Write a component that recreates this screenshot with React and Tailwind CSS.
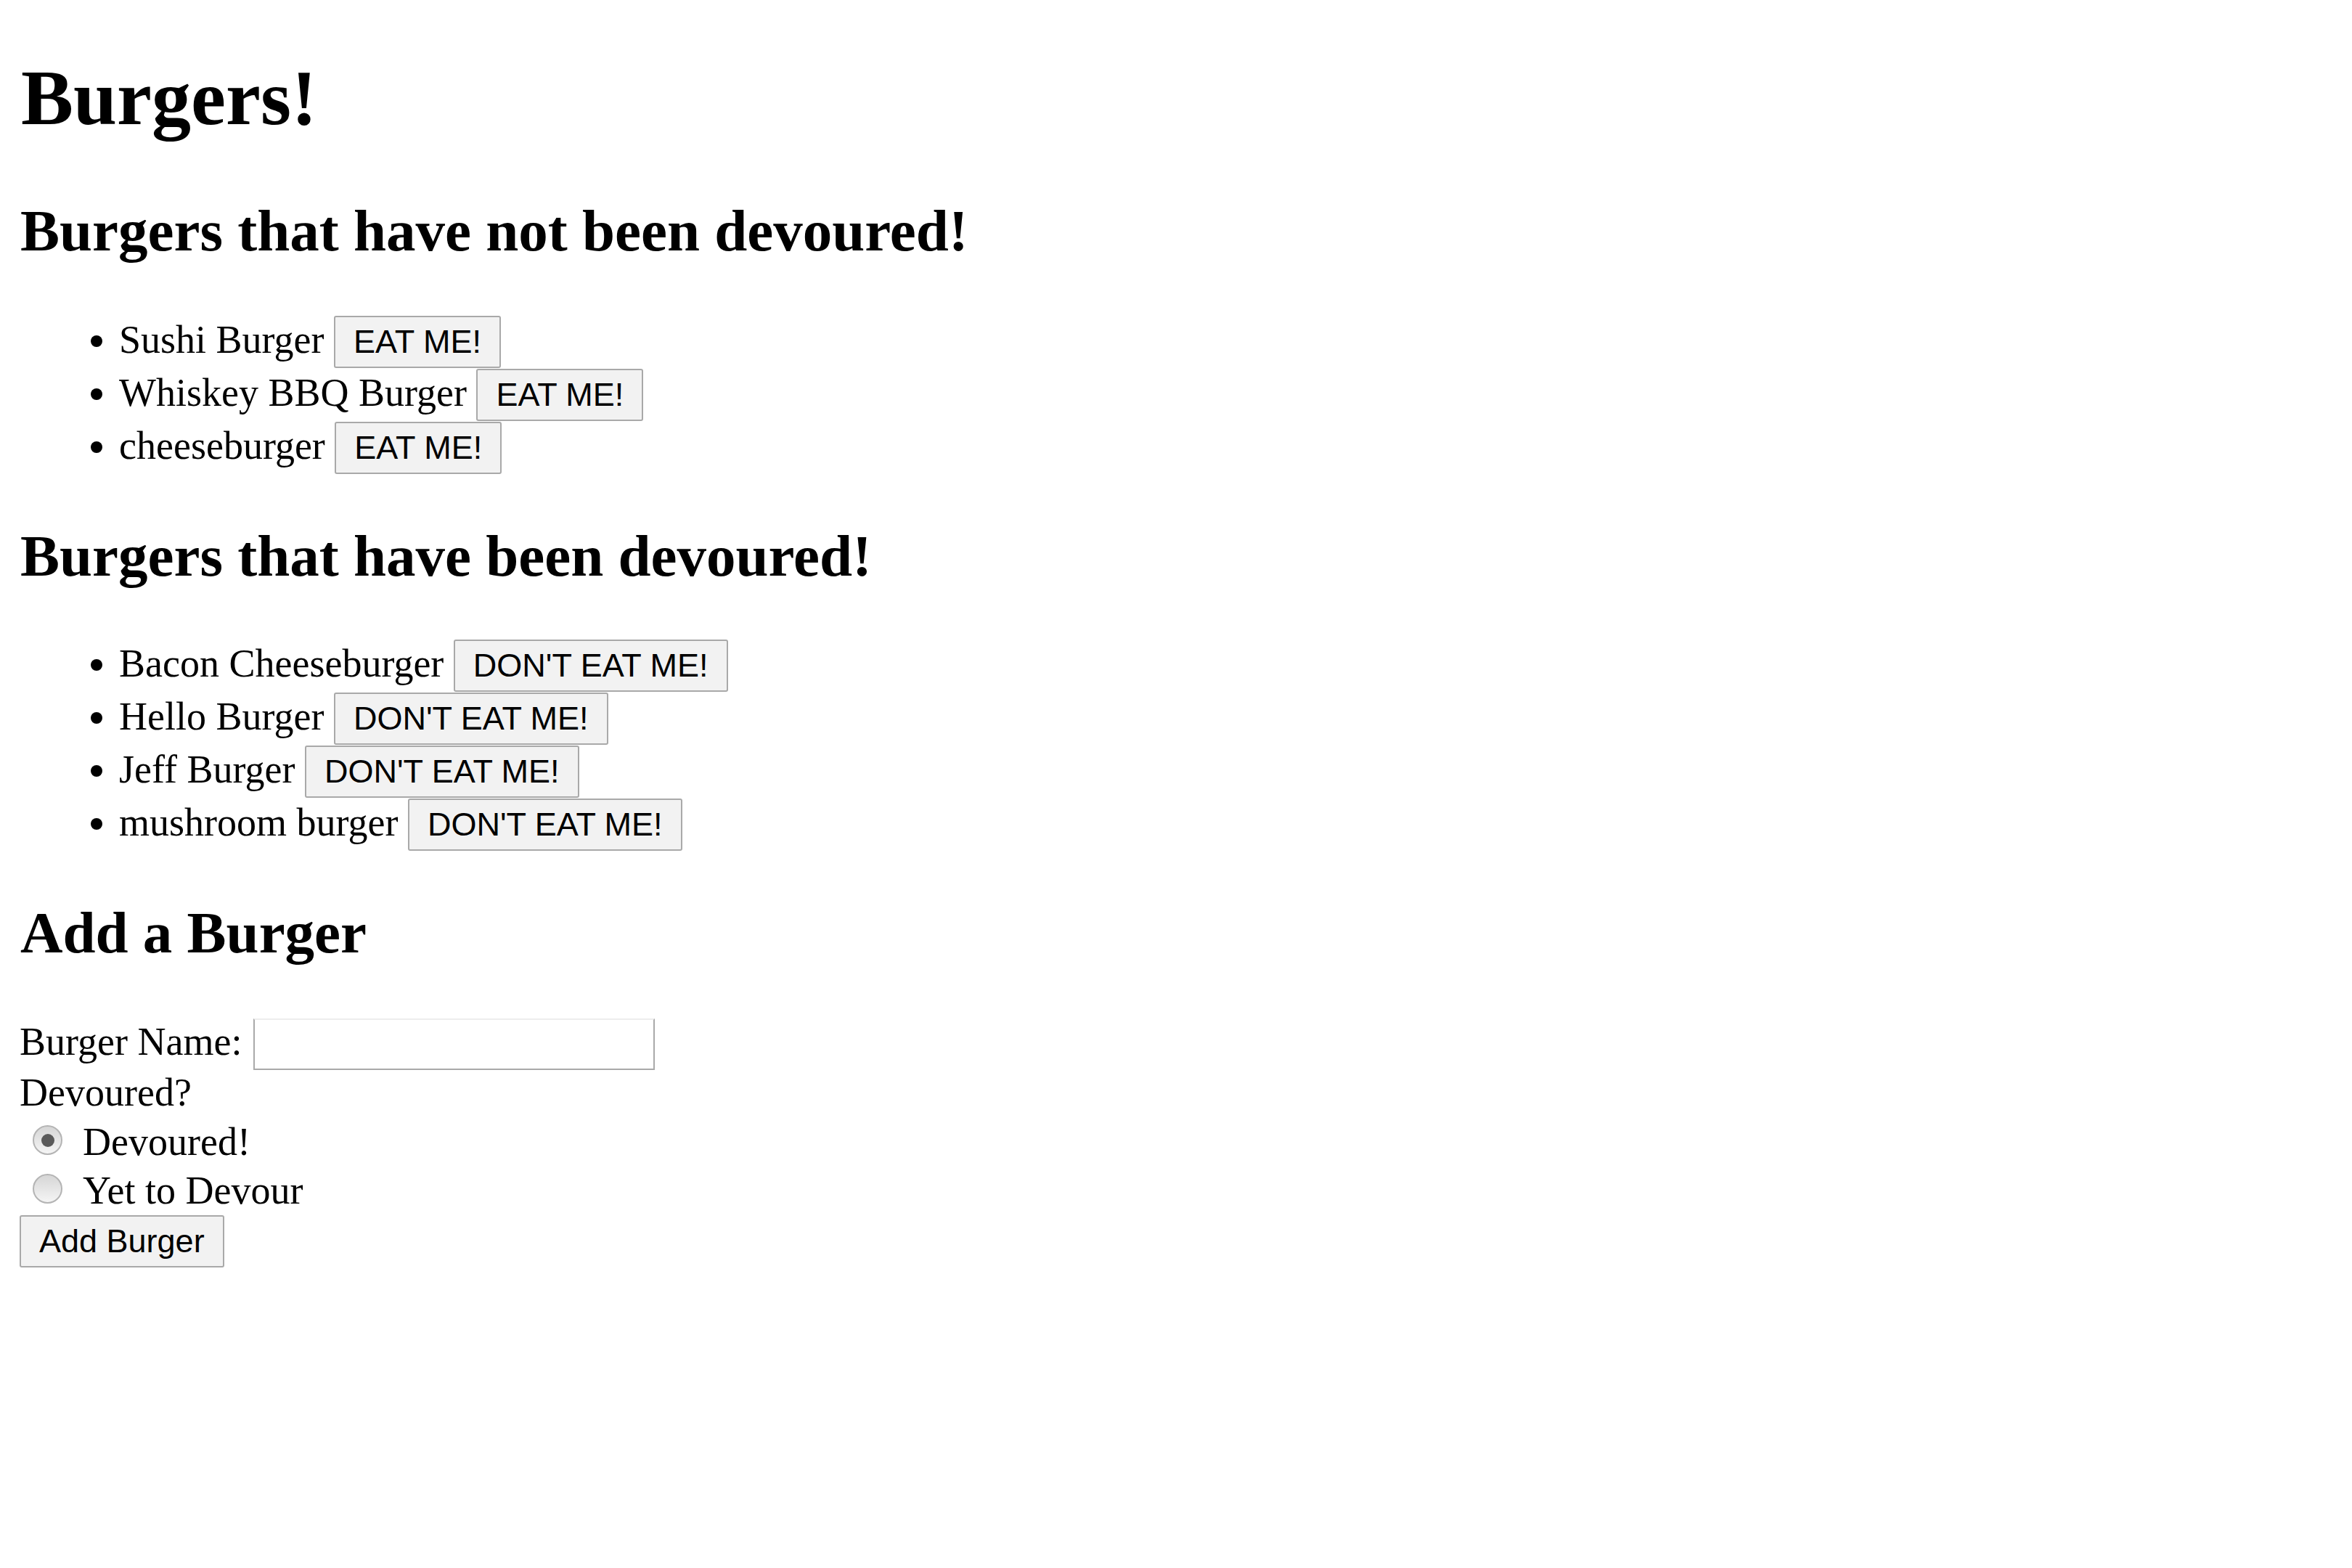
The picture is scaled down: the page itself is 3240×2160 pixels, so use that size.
import React from "react";

const serif = "font-['Liberation_Serif','Times_New_Roman',serif]";

function Btn({ children, className = "" }) {
  return (
    <button
      type="button"
      className={`inline-block align-baseline rounded-[3px] border-2 border-[#a9a9a9] bg-[#f2f2f2] px-[25px] py-[8px] font-['Liberation_Sans',Arial,sans-serif] text-[45px] leading-[52px] text-black ${className}`}
    >
      {children}
    </button>
  );
}

function Radio({ checked, label }) {
  return (
    <div className="flex h-[67px] items-start">
      <span className="ml-[18px] mt-[14px] flex h-[41px] w-[41px] items-center justify-center rounded-full border-2 border-[#b4b4b4] bg-linear-to-b from-[#d6d6d6] to-[#f5f5f5]">
        {checked && <span className="h-[18px] w-[18px] rounded-full bg-[#5a5a5a]" />}
      </span>
      <span className="ml-[28px] mt-[6px] text-[54px] leading-[62px]">{label}</span>
    </div>
  );
}

export default function App() {
  const notDevoured = ["Sushi Burger", "Whiskey BBQ Burger", "cheeseburger"];
  const devoured = ["Bacon Cheeseburger", "Hello Burger", "Jeff Burger", "mushroom burger"];
  return (
    <div className={`${serif} flex min-h-screen flex-col items-start bg-white px-[27px] pt-[73px] text-black`}>
      <h1 className="ml-[2px] text-[108px] font-bold leading-[124px]">Burgers!</h1>

      <h2 className="ml-[1px] mt-[75px] text-[81px] font-bold leading-[93px]">Burgers that have not been devoured!</h2>
      <ul className="mt-[70px] list-disc pl-[137px] text-[54px] leading-[62px]">
        {notDevoured.map((b) => (
          <li key={b} className="h-[73px]">
            {b} <Btn>EAT ME!</Btn>
          </li>
        ))}
      </ul>

      <h2 className="ml-[1px] mt-[66px] text-[81px] font-bold leading-[93px]">Burgers that have been devoured!</h2>
      <ul className="mt-[68px] list-disc pl-[137px] text-[54px] leading-[62px]">
        {devoured.map((b) => (
          <li key={b} className="h-[73px]">
            {b} <Btn>DON'T EAT ME!</Btn>
          </li>
        ))}
      </ul>

      <h2 className="ml-[1px] mt-[66px] text-[81px] font-bold leading-[93px]">Add a Burger</h2>
      <form className="mt-[71px] flex flex-col items-start" onSubmit={(e) => e.preventDefault()}>
        <div className="flex h-[71px] items-start">
          <label className="mt-[1px] text-[54px] leading-[62px]">Burger Name:</label>
          <input
            type="text"
            className="ml-[16px] h-[71px] w-[553px] border-2 border-[#a9a9a9] border-t-[#ededed] bg-white outline-none"
          />
        </div>
        <div className="h-[62px] text-[54px] leading-[62px]">Devoured?</div>
        <Radio checked label="Devoured!" />
        <Radio label="Yet to Devour" />
        <Btn className="mt-[4px]">Add Burger</Btn>
      </form>
    </div>
  );
}
